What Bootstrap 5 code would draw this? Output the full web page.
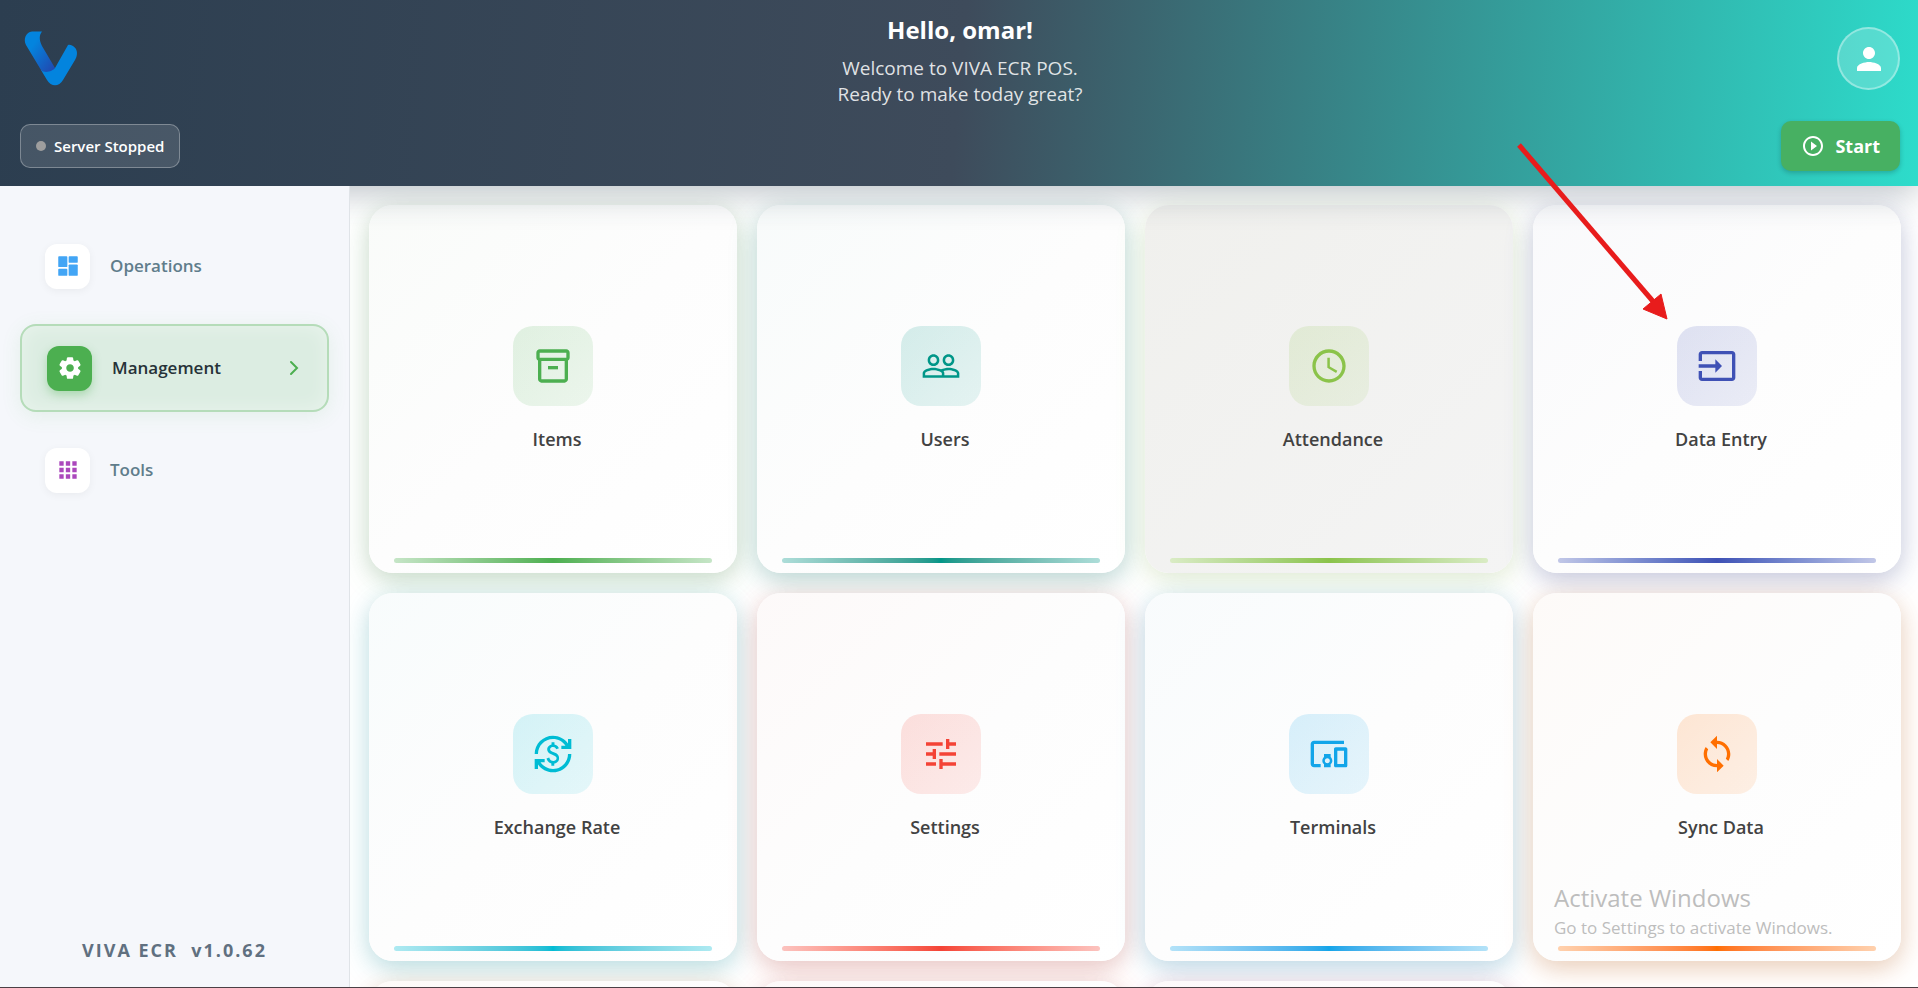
<!DOCTYPE html>
<html lang="en">
<head>
<meta charset="utf-8">
<meta name="viewport" content="width=device-width, initial-scale=1">
<title>VIVA ECR POS</title>
<link href="https://cdn.jsdelivr.net/npm/bootstrap@5.3.0/dist/css/bootstrap.min.css" rel="stylesheet">
<style>
body { font-family: "Open Sans", "Noto Sans", sans-serif; background: #fff; }
svg { display: block; fill: currentColor; flex: none; }
.topbar { background: linear-gradient(95deg, #2c3e50 0%, #3e4b5b 50%, #2ddccb 100%); box-shadow: 0 8px 32px rgba(44,62,80,.3); padding: 12px 18px 15px 20px; min-height: 186px; z-index: 1; }
.top-side { flex: 1 1 0; }
.hello { font-size: 24px; line-height: 36px; font-weight: 700; }
.welcome { font-size: 19px; line-height: 26px; color: rgba(255,255,255,.85); padding-top: 7px; }
.status-chip { height: 44px; border: 1px solid rgba(255,255,255,.3); border-radius: 10px; background: rgba(255,255,255,.12); font-size: 15px; font-weight: 600; padding: 0 15px; margin-bottom: 3px; }
.status-dot { width: 10px; height: 10px; background: #9e9e9e; }
.avatar { width: 63px; height: 63px; border: 2px solid rgba(255,255,255,.35); background: rgba(255,255,255,.2); margin-top: 15px; }
.btn-start, .btn-start:hover { height: 50px; border-radius: 10px; background: #47b062; color: #fff; font-size: 18px; font-weight: 700; padding: 0 20px; gap: 10px; box-shadow: 0 2px 5px rgba(0,0,0,.2); }
.sidebar { width: 350px; background: #f5f7fb; border-right: 1px solid #e0e4e8; padding: 36px 20px 24px; z-index: 2; }
.side-nav { gap: 14px; }
.side-item { height: 88px; padding: 0 25px; gap: 20px; color: #607d8b; font-size: 17px; font-weight: 600; text-decoration: none; border-radius: 16px; }
.side-item.active { border: 2px solid #b5dcb9; color: #263238; background: #dcede2; box-shadow: 0 4px 20px rgba(76,175,80,.1), inset 0 0 20px rgba(255,255,255,.4); }
.side-tile { width: 45px; height: 45px; border-radius: 12px; background: #fff; box-shadow: 0 2px 8px rgba(0,0,0,.05); }
.active .side-tile { background: #4caf50; color: #fff; box-shadow: 0 4px 10px rgba(76,175,80,.35); }
.ink-blue { color: #42a5f5; } .ink-purple { color: #ab47bc; }
.chevron { fill: none; stroke: #4caf50; stroke-width: 2; stroke-linecap: round; }
.version { font-size: 18px; font-weight: 700; color: #607080; letter-spacing: 2px; white-space: pre; }
.tiles { display: grid; grid-template-columns: repeat(4, 1fr); gap: 20px; padding: 19px 17px 0 19px; }
.tile { aspect-ratio: 1; border-radius: 24px; color: #424242; text-decoration: none; position: relative; gap: 20px;
  background: linear-gradient(135deg, color-mix(in srgb, var(--tint) 2%, #fdfdfd), #fdfdfd 50%, #fff);
  box-shadow: 0 8px 30px color-mix(in srgb, var(--tint) 20%, transparent), 0 6px 22px rgba(0,0,0,.1); }
.tile.muted { background: linear-gradient(135deg, #f0f0ed, #f4f4f4); box-shadow: 0 8px 30px color-mix(in srgb, var(--tint) 20%, transparent), 0 6px 22px rgba(0,0,0,.04); }
.tile-icon { width: 80px; height: 80px; border-radius: 20px; color: var(--tint); background: linear-gradient(135deg, color-mix(in srgb, var(--tint) 16%, transparent), color-mix(in srgb, var(--tint) 10%, transparent)); }
.tile-name { font-size: 18px; line-height: 26px; font-weight: 600; padding-left: 8px; }
.tile-bar { position: absolute; left: 25px; right: 25px; bottom: 10px; height: 5px; border-radius: 3px; background: linear-gradient(90deg, color-mix(in srgb, var(--tint) 32%, #fff), var(--tint), color-mix(in srgb, var(--tint) 32%, #fff)); }
.t-green { --tint: #4caf50; } .t-teal { --tint: #009688; } .t-lime { --tint: #8bc34a; } .t-indigo { --tint: #3f51b5; }
.t-cyan { --tint: #00bcd4; } .t-red { --tint: #f44336; } .t-sky { --tint: #12a5e9; } .t-orange { --tint: #ff6f00; } .t-pink { --tint: #e91e63; }
.pointer-arrow { left: 1510px; top: 136px; z-index: 5; pointer-events: none; }
.pointer-arrow path { fill: #e81c1c; stroke: #e81c1c; }
.watermark { left: 1554px; bottom: 47px; z-index: 5; color: #bdbdbd; pointer-events: none; }
.watermark-title { font-size: 24px; line-height: 34px; }
.watermark-sub { font-size: 17px; line-height: 26px; }
.bottom-edge { height: 1px; background: #4b4045; z-index: 6; }
</style>
</head>
<body class="vh-100 overflow-hidden d-flex flex-column position-relative">
<header class="topbar flex-shrink-0 d-flex justify-content-between position-relative text-white">
  <div class="top-side d-flex flex-column justify-content-between align-items-start">
    <svg class="mt-3" width="62" height="62" viewBox="0 0 62 62" role="img" aria-label="VIVA">
      <defs><linearGradient id="fold" x1="0" y1="0" x2="1" y2="1"><stop offset=".3" stop-color="#0384de"/><stop offset="1" stop-color="#2344ac"/></linearGradient></defs>
      <path fill="#0384de" d="M48 17C52 16 57 20 57 25C57 28 56 30 55 32L43 52C39 59 31 59 27 52L21 42L35 40Z"/>
      <path fill="url(#fold)" d="M22 3.500H12C6 4 3 11 6 17L21 42C25 46 33 43 35 40L22 18C19 12 19 7 22 3.500Z"/>
    </svg>
    <div class="status-chip d-flex align-items-center gap-2"><span class="status-dot rounded-circle"></span>Server Stopped</div>
  </div>
  <div class="text-center">
    <h1 class="hello m-0">Hello, omar!</h1>
    <p class="welcome m-0">Welcome to VIVA ECR POS.<br>Ready to make today great?</p>
  </div>
  <div class="top-side d-flex flex-column justify-content-between align-items-end">
    <button type="button" class="avatar rounded-circle d-flex align-items-center justify-content-center p-0 text-white" aria-label="Profile">
      <svg width="36" height="36" viewBox="0 0 24 24"><path d="M12 12c2.210 0 4-1.790 4-4s-1.790-4-4-4-4 1.790-4 4 1.790 4 4 4zm0 2c-2.670 0-8 1.340-8 4v2h16v-2c0-2.660-5.330-4-8-4z"/></svg>
    </button>
    <button type="button" class="btn btn-start border-0 d-flex align-items-center">
      <svg width="24" height="24" viewBox="0 0 24 24"><path d="M10 16.500l6-4.500-6-4.500v9zM12 2C6.480 2 2 6.480 2 12s4.480 10 10 10 10-4.480 10-10S17.520 2 12 2zm0 18c-4.410 0-8-3.590-8-8s3.590-8 8-8 8 3.590 8 8-3.590 8-8 8z"/></svg>
      Start
    </button>
  </div>
</header>
<div class="d-flex flex-grow-1 overflow-hidden">
  <aside class="sidebar d-flex flex-column flex-shrink-0 position-relative">
    <nav class="side-nav d-grid">
      <a href="#" class="side-item d-flex align-items-center">
        <span class="side-tile d-flex align-items-center justify-content-center"><svg class="ink-blue" width="26" height="26" viewBox="0 0 24 24"><rect x="3" y="3" width="8.400" height="10" rx=".8"/><rect x="3" y="14.600" width="8.400" height="6.400" rx=".8"/><rect x="12.600" y="3" width="8.400" height="6" rx=".8"/><rect x="12.600" y="10.600" width="8.400" height="10.400" rx=".8"/></svg></span>
        Operations
      </a>
      <a href="#" class="side-item active d-flex align-items-center" aria-current="page">
        <span class="side-tile d-flex align-items-center justify-content-center"><svg width="26" height="26" viewBox="0 0 24 24"><path d="M19.500 12c0-.23-.01-.45-.03-.68l1.860-1.410c.4-.3.510-.86.260-1.300l-1.870-3.230c-.25-.44-.79-.62-1.250-.42l-2.150.91c-.37-.26-.76-.49-1.170-.68l-.29-2.310c-.06-.5-.49-.88-.99-.88h-3.730c-.51 0-.94.38-1 .88l-.29 2.310c-.41.190-.8.420-1.170.68l-2.150-.91c-.46-.2-1-.02-1.250.42L2.410 8.620c-.25.440-.14.990.26 1.300l1.860 1.410C4.510 11.550 4.500 11.770 4.500 12s.01.450.03.680l-1.860 1.410c-.4.300-.51.860-.26 1.300l1.870 3.230c.25.440.79.620 1.250.42l2.150-.91c.37.260.76.490 1.170.68l.29 2.310c.06.500.49.880.99.880h3.730c.5 0 .93-.38.990-.88l.29-2.310c.41-.19.800-.42 1.170-.68l2.150.91c.46.200 1 .02 1.250-.42l1.870-3.230c.25-.44.140-.99-.26-1.300l-1.860-1.410c.03-.23.040-.45.040-.68zm-7.460 3.500c-1.930 0-3.500-1.570-3.500-3.500s1.570-3.500 3.500-3.500 3.500 1.570 3.500 3.500-1.570 3.500-3.500 3.500z"/></svg></span>
        Management
        <svg class="chevron ms-auto" width="18" height="18" viewBox="0 0 18 18"><path d="M7 3l6 6-6 6"/></svg>
      </a>
      <a href="#" class="side-item d-flex align-items-center">
        <span class="side-tile d-flex align-items-center justify-content-center"><svg class="ink-purple" width="26" height="26" viewBox="0 0 24 24"><path d="M4 8h4V4H4v4zm6 12h4v-4h-4v4zm-6 0h4v-4H4v4zm0-6h4v-4H4v4zm6 0h4v-4h-4v4zm6-10v4h4V4h-4zm-6 4h4V4h-4v4zm6 6h4v-4h-4v4zm0 6h4v-4h-4v4z"/></svg></span>
        Tools
      </a>
    </nav>
    <div class="version mt-auto text-center">VIVA ECR  v1.0.62</div>
  </aside>
  <main class="flex-grow-1 overflow-hidden">
    <div class="tiles">
      <a href="#" class="tile t-green d-flex flex-column align-items-center justify-content-center">
        <span class="tile-icon d-flex align-items-center justify-content-center"><svg width="40" height="40" viewBox="0 0 24 24"><path fill-rule="evenodd" d="M20 2H4c-1 0-2 .9-2 2v3.010c0 .72.430 1.340 1 1.690V20c0 1.100 1.100 2 2 2h14c.9 0 2-.9 2-2V8.700c.57-.35 1-.97 1-1.690V4c0-1.100-1-2-2-2zm-1 18H5V9h14v11zm1-13H4V4h16v3z"/><path d="M9 12h6v2H9z"/></svg></span>
        <span class="tile-name">Items</span><span class="tile-bar"></span>
      </a>
      <a href="#" class="tile t-teal d-flex flex-column align-items-center justify-content-center">
        <span class="tile-icon d-flex align-items-center justify-content-center"><svg width="40" height="40" viewBox="0 0 24 24"><path d="M16.500 13c-1.200 0-3.070.34-4.500 1-1.430-.67-3.300-1-4.500-1C5.330 13 1 14.080 1 16.250V19h22v-2.750c0-2.170-4.330-3.250-6.500-3.250zm-4 4.500h-10v-1.250c0-.54 2.560-1.750 5-1.750s5 1.210 5 1.750v1.250zm9 0H14v-1.250c0-.46-.2-.86-.52-1.220.88-.3 1.960-.53 3.020-.53 2.440 0 5 1.210 5 1.750v1.250zM7.500 12c1.930 0 3.500-1.570 3.500-3.500S9.430 5 7.500 5 4 6.570 4 8.500 5.570 12 7.500 12zm0-5.500c1.100 0 2 .9 2 2s-.9 2-2 2-2-.9-2-2 .9-2 2-2zm9 5.500c1.930 0 3.500-1.570 3.500-3.500S18.430 5 16.500 5 13 6.570 13 8.500s1.570 3.500 3.500 3.500zm0-5.500c1.100 0 2 .9 2 2s-.9 2-2 2-2-.9-2-2 .9-2 2-2z"/></svg></span>
        <span class="tile-name">Users</span><span class="tile-bar"></span>
      </a>
      <a href="#" class="tile muted t-lime d-flex flex-column align-items-center justify-content-center">
        <span class="tile-icon d-flex align-items-center justify-content-center"><svg width="40" height="40" viewBox="0 0 24 24"><path d="M11.990 2C6.470 2 2 6.480 2 12s4.470 10 9.990 10C17.520 22 22 17.520 22 12S17.520 2 11.990 2zM12 20c-4.420 0-8-3.580-8-8s3.580-8 8-8 8 3.580 8 8-3.580 8-8 8zm.5-13H11v6l5.250 3.150.75-1.230-4.500-2.670z"/></svg></span>
        <span class="tile-name">Attendance</span><span class="tile-bar"></span>
      </a>
      <a href="#" class="tile t-indigo d-flex flex-column align-items-center justify-content-center">
        <span class="tile-icon d-flex align-items-center justify-content-center"><svg width="40" height="40" viewBox="0 0 24 24"><path d="M21 3.010H3c-1.100 0-2 .9-2 2V9h2V4.990h18v14.030H3V15H1v4.010c0 1.100.9 1.980 2 1.980h18c1.100 0 2-.88 2-1.980v-14c0-1.110-.9-2-2-2zM11 16l4-4-4-4v3H1v2h10v3z"/></svg></span>
        <span class="tile-name">Data Entry</span><span class="tile-bar"></span>
      </a>
      <a href="#" class="tile t-cyan d-flex flex-column align-items-center justify-content-center">
        <span class="tile-icon d-flex align-items-center justify-content-center"><svg width="40" height="40" viewBox="0 0 24 24"><path d="M12.890,11.100c-1.780-0.590-2.640-0.960-2.640-1.900c0-1.020,1.110-1.390,1.810-1.390c1.310,0,1.790,0.990,1.900,1.340l1.580-0.670c-0.150-0.440-0.820-1.910-2.660-2.230V5h-1.750v1.260c-2.600,0.560-2.620,2.850-2.620,2.960c0,2.270,2.250,2.910,3.350,3.310c1.580,0.560,2.280,1.070,2.280,2.030c0,1.130-1.050,1.610-1.980,1.610c-1.820,0-2.340-1.870-2.400-2.090L8.100,14.750c0.630,2.190,2.280,2.780,2.900,2.960V19h1.750v-1.240c0.400-0.090,2.900-0.590,2.900-3.220C15.650,13.150,15.040,11.830,12.890,11.100z M3,21H1v-6h6v2H4.520c1.610,2.410,4.360,4,7.480,4c4.970,0,9-4.030,9-9h2c0,6.080-4.920,11-11,11c-3.720,0-7.010-1.850-9-4.670L3,21z M1,12C1,5.920,5.920,1,12,1c3.720,0,7.010,1.850,9,4.670L21,3h2v6h-6V7h2.480C17.870,4.590,15.120,3,12,3c-4.970,0-9,4.030-9,9H1z"/></svg></span>
        <span class="tile-name">Exchange Rate</span><span class="tile-bar"></span>
      </a>
      <a href="#" class="tile t-red d-flex flex-column align-items-center justify-content-center">
        <span class="tile-icon d-flex align-items-center justify-content-center"><svg width="40" height="40" viewBox="0 0 24 24"><path d="M3 17v2h6v-2H3zM3 5v2h10V5H3zm10 16v-2h8v-2h-8v-2h-2v6h2zM7 9v2H3v2h4v2h2V9H7zm14 4v-2H11v2h10zm-6-4h2V7h4V5h-4V3h-2v6z"/></svg></span>
        <span class="tile-name">Settings</span><span class="tile-bar"></span>
      </a>
      <a href="#" class="tile t-sky d-flex flex-column align-items-center justify-content-center">
        <span class="tile-icon d-flex align-items-center justify-content-center"><svg width="40" height="40" viewBox="0 0 24 24"><path d="M3 6h18V4H3c-1.100 0-2 .9-2 2v12c0 1.100.9 2 2 2h4v-2H3V6zm10 6H9v1.780c-.61.550-1 1.330-1 2.220s.39 1.670 1 2.220V20h4v-1.780c.61-.55 1-1.340 1-2.220s-.39-1.670-1-2.220V12zm-2 5.500c-.83 0-1.500-.67-1.500-1.500s.67-1.500 1.500-1.500 1.500.67 1.500 1.500-.67 1.500-1.500 1.500zM22 8h-6c-.5 0-1 .5-1 1v10c0 .5.500 1 1 1h6c.5 0 1-.5 1-1V9c0-.5-.5-1-1-1zm-1 10h-4v-8h4v8z"/></svg></span>
        <span class="tile-name">Terminals</span><span class="tile-bar"></span>
      </a>
      <a href="#" class="tile t-orange d-flex flex-column align-items-center justify-content-center">
        <span class="tile-icon d-flex align-items-center justify-content-center"><svg width="40" height="40" viewBox="0 0 24 24"><path d="M12 4V1L8 5l4 4V6c3.310 0 6 2.690 6 6 0 1.010-.25 1.970-.7 2.800l1.460 1.460C19.540 15.030 20 13.570 20 12c0-4.420-3.580-8-8-8zm0 14c-3.310 0-6-2.690-6-6 0-1.010.25-1.970.7-2.800L5.240 7.740C4.460 8.970 4 10.430 4 12c0 4.420 3.580 8 8 8v3l4-4-4-4v3z"/></svg></span>
        <span class="tile-name">Sync Data</span><span class="tile-bar"></span>
      </a>
      <a href="#" class="tile t-orange" aria-label="More"></a>
      <a href="#" class="tile t-red" aria-label="More"></a>
      <a href="#" class="tile t-pink" aria-label="More"></a>
    </div>
  </main>
</div>
<svg class="pointer-arrow position-absolute" width="170" height="190" viewBox="0 0 170 190" aria-hidden="true"><path d="M9 9L147 170" stroke-width="5"/><path d="M157 183L133 173L151 158Z"/></svg>
<div class="watermark position-absolute">
  <div class="watermark-title">Activate Windows</div>
  <div class="watermark-sub">Go to Settings to activate Windows.</div>
</div>
<div class="bottom-edge position-absolute bottom-0 start-0 end-0"></div>
<script src="https://cdn.jsdelivr.net/npm/bootstrap@5.3.0/dist/js/bootstrap.bundle.min.js"></script>
</body>
</html>
